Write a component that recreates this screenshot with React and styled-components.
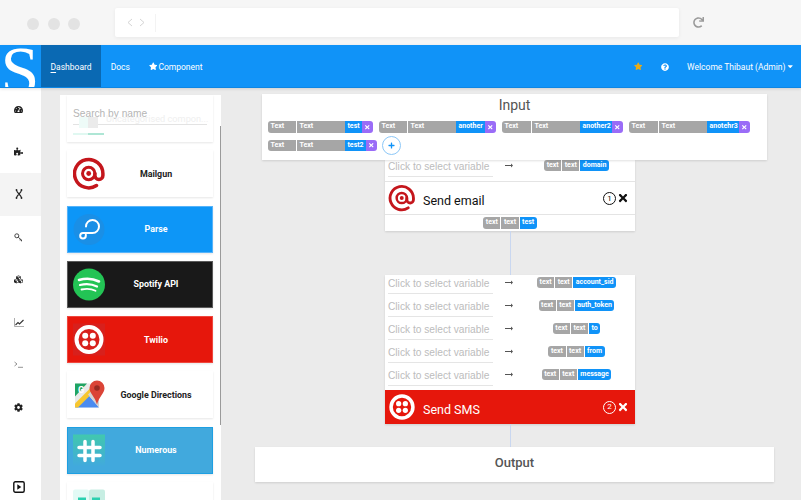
import styled, { createGlobalStyle } from 'styled-components'
import {
  FaTachometerAlt,
  FaPuzzlePiece,
  FaCubes,
  FaCog,
  FaStar,
  FaQuestionCircle,
  FaCaretDown,
  FaTimes,
  FaPlus,
  FaRedo,
} from 'react-icons/fa'

const GlobalStyle = createGlobalStyle`
  html, body {
    margin: 0;
    height: 100%;
    overflow: hidden;
    background: #ebebeb;
    font-family: Roboto, "Liberation Sans", sans-serif;
  }
  * { box-sizing: border-box; }
`

const Page = styled.div`
  width: 801px;
  height: 500px;
  display: flex;
  flex-direction: column;
  overflow: hidden;
`

/* browser chrome */
const Chrome = styled.div`
  height: 45px;
  flex: none;
  background: #f6f6f6;
  display: flex;
  align-items: center;
  padding: 0 0 0 27px;
`
const Lights = styled.div`
  display: flex;
  gap: 8.5px;
  width: 88px;
  margin-top: 3px;
`
const Light = styled.span`
  width: 12px;
  height: 12px;
  border-radius: 50%;
  background: #e3e3e3;
`
const AddressBar = styled.div`
  width: 564px;
  height: 29px;
  background: #fff;
  border-radius: 2px;
  box-shadow: 0 1px 4px rgba(0, 0, 0, 0.06);
  display: flex;
  align-items: center;
  padding-left: 12px;
  gap: 6px;
`
const AddressDivider = styled.span`
  width: 1px;
  height: 18px;
  margin-left: 4px;
  background: #f3f3f3;
`
const Reload = styled.div`
  margin-left: 14px;
  color: #9a9a9a;
  font-size: 11px;
  display: flex;
`

/* top navigation */
const Navbar = styled.header`
  height: 43px;
  flex: none;
  background: #1093f8;
  border-bottom: 1px solid #0d86e4;
  box-shadow: 0 1px 3px rgba(0, 0, 0, 0.12);
  display: flex;
  align-items: stretch;
  color: #fff;
  font-size: 8.5px;
  position: relative;
  z-index: 3;
`
const Logo = styled.div`
  width: 41px;
  overflow: hidden;
  font-family: "Liberation Serif", serif;
  font-size: 70px;
  line-height: 54px;
  text-align: center;
  padding-right: 1px;
`
const NavItem = styled.a`
  display: flex;
  align-items: center;
  gap: 1px;
  padding: 1px 9.5px 0;
  background: ${(props) => (props.$active ? '#0a69b3' : 'transparent')};
`
const AccessKey = styled.span`
  text-decoration: underline;
  text-underline-offset: 2px;
`
const NavRight = styled.div`
  margin-left: auto;
  display: flex;
  align-items: center;
  padding: 1px 7px 0 0;
`
const NavStar = styled.span`
  color: #e8ab17;
  font-size: 8.5px;
  display: flex;
  margin-right: 19px;
`
const NavHelp = styled.span`
  font-size: 8px;
  display: flex;
  margin-right: 18px;
`
const Welcome = styled.span`
  display: flex;
  align-items: center;
`

/* body */
const Body = styled.div`
  flex: 1;
  display: flex;
  min-height: 0;
`
const Sidebar = styled.nav`
  width: 41px;
  flex: none;
  background: #fff;
  display: flex;
  flex-direction: column;
`
const SideItem = styled.div`
  height: 42.6px;
  flex: none;
  display: flex;
  align-items: center;
  justify-content: center;
  font-size: 9px;
  color: #222;
  padding-right: 4px;
  background: ${(props) => (props.$active ? '#f4f4f4' : 'transparent')};
`
const SideBottom = styled(SideItem)`
  margin-top: auto;
  height: 26px;
  color: #111;
`

const Panel = styled.aside`
  width: 161px;
  flex: none;
  margin: 7px 0 0 19px;
  background: #fff;
  padding: 0 8px 0 7px;
  display: flex;
  flex-direction: column;
  gap: 8.3px;
  position: relative;
`
const ScrollThumb = styled.div`
  position: absolute;
  right: 0;
  top: 31px;
  width: 1.5px;
  height: 299px;
  background: #9a9a9a;
`
const SearchCard = styled.div`
  height: 47px;
  flex: none;
  position: relative;
  box-shadow: 0 1px 2px rgba(0, 0, 0, 0.1);
  padding: 10px 6px 0;
`
const SearchInput = styled.div`
  height: 20px;
  border-bottom: 1px solid #e3e3e3;
  color: #b5b5b5;
  font-family: "Liberation Sans", sans-serif;
  font-size: 10.2px;
  line-height: 17px;
  position: relative;
`
const GhostTile = styled.span`
  position: absolute;
  left: 6px;
  top: 12px;
  width: 19px;
  height: 11px;
  background: linear-gradient(90deg, #eefbf8 50%, #ebebeb 50%);
`
const GhostLabel = styled.span`
  position: absolute;
  left: 33px;
  top: 8px;
  font-family: Roboto, sans-serif;
  font-size: 9.2px;
  line-height: 11px;
  color: #efefef;
  white-space: nowrap;
`
const GhostBar = styled.div`
  position: absolute;
  left: 6px;
  top: 38px;
  width: 31px;
  height: 2px;
  background: linear-gradient(90deg, #e0f8f1 50%, #aee6d5 50%);
`
const ToolCard = styled.div`
  height: 47px;
  flex: none;
  display: flex;
  align-items: center;
  padding: 0 5px;
  background: ${(props) => props.$bg};
  color: ${(props) => props.$fg};
  border: 1px solid ${(props) => props.$border};
  box-shadow: 0 1px 2px rgba(0, 0, 0, 0.1);
`
const ToolIcon = styled.svg`
  width: 32px;
  height: 35px;
  flex: none;
`
const ToolLabel = styled.div`
  flex: 1;
  text-align: center;
  font-size: 8.9px;
  font-weight: 700;
  white-space: nowrap;
`

/* flow canvas */
const Main = styled.main`
  flex: 1;
  min-width: 0;
  display: flex;
  flex-direction: column;
  align-items: flex-start;
`
const InputCard = styled.section`
  width: 505px;
  height: 66px;
  flex: none;
  margin: 6px 0 0 41px;
  background: #fff;
  box-shadow: 0 1px 2px rgba(0, 0, 0, 0.12);
  padding: 3px 6px 0;
  position: relative;
  z-index: 1;
`
const InputTitle = styled.h2`
  margin: 0;
  font-size: 14px;
  font-weight: 400;
  line-height: 16px;
  color: #555;
  text-align: center;
`
const OutputTitle = styled(InputTitle)`
  font-size: 13px;
  font-weight: 500;
`
const ChipWrap = styled.div`
  margin-top: 8px;
  display: flex;
  flex-wrap: wrap;
  align-items: center;
  gap: 7px 6px;
`
const Chip = styled.div`
  display: flex;
  height: 11.5px;
  border-radius: 3px;
  overflow: hidden;
  font-size: 7px;
  font-weight: 700;
  line-height: 11.5px;
  color: #fff;
  white-space: nowrap;
`
const ChipPart = styled.span`
  background: ${(props) => props.$bg || '#a6a6a6'};
  padding: 0 2.5px;
  margin-right: ${(props) => (props.$gap ? '1px' : '0')};
  width: ${(props) => props.$width || 'auto'};
  text-align: ${(props) => props.$align || 'left'};
`
const RemovePart = styled.span`
  width: 11px;
  background: #9a6cf7;
  display: flex;
  align-items: center;
  justify-content: center;
  font-size: 6.5px;
`
const AddButton = styled.button`
  width: 19px;
  height: 19px;
  margin: -4px 0 -4px -1px;
  padding: 0;
  border-radius: 50%;
  border: 1px solid #8cc7f7;
  background: #fff;
  color: #1093f8;
  font-size: 7px;
  display: flex;
  align-items: center;
  justify-content: center;
`
const FlowCard = styled.section`
  width: 250px;
  flex: none;
  margin-left: 164px;
  background: #fff;
  box-shadow: 0 1px 2px rgba(0, 0, 0, 0.12);
`
const VarRow = styled.div`
  height: ${(props) => props.$height || '23px'};
  display: flex;
  align-items: flex-end;
  overflow: hidden;
  padding: 0 0 4px 3px;
`
const VarField = styled.div`
  width: 105px;
  flex: none;
  height: 18px;
  border-bottom: 1px solid #e5e5e5;
  color: #bcbcbc;
  font-family: "Liberation Sans", sans-serif;
  font-size: 10.2px;
  line-height: 16px;
  white-space: nowrap;
`
const VarArrow = styled.svg`
  width: 8px;
  height: 5px;
  margin: 0 0 9px 12px;
  flex: none;
`
const VarTarget = styled.div`
  flex: 1;
  display: flex;
  justify-content: center;
  padding: 0 0 6px 5px;
`
const StepHeader = styled.div`
  height: 34px;
  display: flex;
  align-items: center;
  padding: 0 6px 0 3px;
  gap: 7px;
  background: ${(props) => props.$bg};
  color: ${(props) => props.$fg};
  border-top: ${(props) => props.$rule};
  border-bottom: ${(props) => props.$rule};
`
const StepLogo = styled.svg`
  width: 28px;
  height: 28px;
  flex: none;
`
const StepTitle = styled.div`
  flex: 1;
  margin-top: 4px;
  font-size: 12.5px;
  white-space: nowrap;
`
const StepNumber = styled.span`
  width: 13px;
  height: 13px;
  border-radius: 50%;
  border: ${(props) => (props.$thick ? '1.5px' : '1px')} solid currentColor;
  font-size: 8px;
  line-height: ${(props) => (props.$thick ? '10px' : '11px')};
  text-align: center;
`
const StepClose = styled.span`
  font-size: 12px;
  display: flex;
  margin-left: -6px;
`
const StepOutput = styled.div`
  height: 16px;
  display: flex;
  justify-content: center;
  padding-top: 2px;
`
const Connector = styled.div`
  width: 1px;
  height: ${(props) => props.$height};
  flex: none;
  margin-left: 289px;
  background: #c9d7f0;
`
const OutputCard = styled.section`
  width: 519px;
  height: 35px;
  flex: none;
  margin-left: 34px;
  background: #fff;
  box-shadow: 0 1px 2px rgba(0, 0, 0, 0.12);
  padding-top: 8px;
`

const MailgunMark = ({ Svg = ToolIcon }) => (
  <Svg viewBox="0 0 32 34" fill="none" stroke="#c4161c">
    <circle cx="15.7" cy="17" r="6.2" strokeWidth="3" />
    <circle cx="15.7" cy="17" r="2.4" fill="#c4161c" strokeWidth="0" />
    <path
      d="M21.9 17v2a4 4 0 0 0 8 0v-2A14.200 14.200 0 1 0 23.500 29"
      strokeWidth="3.500"
      strokeLinecap="round"
    />
  </Svg>
)

const ParseMark = () => (
  <ToolIcon viewBox="0 0 32 32" fill="none">
    <circle cx="16" cy="16" r="15.500" fill="#1a8fe6" />
    <path
      d="M13 13a6.500 6.500 0 1 1 6.500 6.500H10a2.800 2.800 0 1 0 2.800 2.800v-1"
      stroke="#fff"
      strokeWidth="2"
      strokeLinecap="round"
    />
  </ToolIcon>
)

const SpotifyMark = () => (
  <ToolIcon viewBox="0 0 32 32" fill="none" stroke="#fff" strokeLinecap="round">
    <circle cx="16" cy="16" r="16" fill="#23c455" stroke="none" />
    <path d="M6 11.500c7-2 14-1.500 20 1.500" strokeWidth="2.600" />
    <path d="M7 16.500c6-1.500 12-1 17 1.500" strokeWidth="2.200" />
    <path d="M8.500 21c5-1 10-.7 14 1.300" strokeWidth="1.800" />
  </ToolIcon>
)

const TwilioSymbol = () => (
  <>
    <circle cx="16" cy="16" r="12.500" fill="none" stroke="#fff" strokeWidth="4" />
    <circle cx="12.200" cy="12.200" r="3" fill="#fff" />
    <circle cx="19.800" cy="12.200" r="3" fill="#fff" />
    <circle cx="12.200" cy="19.800" r="3" fill="#fff" />
    <circle cx="19.800" cy="19.800" r="3" fill="#fff" />
  </>
)

const TwilioMark = () => (
  <ToolIcon viewBox="0 0 32 32">
    <rect width="32" height="32" fill="#d8201c" />
    <TwilioSymbol />
  </ToolIcon>
)

const DirectionsMark = () => (
  <ToolIcon viewBox="0 0 32 32">
    <rect x="2" y="5" width="24" height="24" rx="1.500" fill="#e9e9e9" />
    <path d="M2 5h12L2 18z" fill="#1fa463" />
    <path d="M2 29l13-13 11 13z" fill="#4a8bf0" />
    <path d="M2 29v-4L21 6h4v3L5 29z" fill="#f7c62f" />
    <path d="M15 16l11-11v24z" fill="#d4d4d4" />
    <path
      d="M24 2a7.500 7.500 0 0 1 7.500 7.500C31.500 15 26 18 24 26c-2-8-7.500-11-7.500-16.500A7.500 7.500 0 0 1 24 2z"
      fill="#db4437"
    />
    <circle cx="24" cy="9.500" r="2.800" fill="#972b23" />
    <text x="5" y="14.500" fontSize="9" fontWeight="700" fill="#fff">G</text>
  </ToolIcon>
)

const NumerousMark = () => (
  <ToolIcon viewBox="0 0 32 32">
    <defs>
      <linearGradient id="numerousFill" x1="0" y1="0" x2="0" y2="1">
        <stop offset="0" stopColor="#41c8ae" />
        <stop offset="1" stopColor="#41a9dd" />
      </linearGradient>
    </defs>
    <rect width="32" height="32" fill="url(#numerousFill)" />
    <path
      d="M12 7v19M20 7v19M6 13h21M6 21h21"
      stroke="#fff"
      strokeWidth="3.500"
      strokeLinecap="round"
    />
  </ToolIcon>
)

const CalcMark = () => (
  <ToolIcon viewBox="0 0 32 32">
    <rect width="16" height="32" rx="2" fill="#e2faf5" />
    <rect x="16" width="16" height="32" rx="2" fill="#c7eee3" />
    <rect x="5" y="8" width="8" height="8" fill="#2ad0b0" />
    <rect x="19" y="8" width="8" height="8" fill="#2ad0b0" />
  </ToolIcon>
)

const ChainIcon = () => (
  <svg width="8" height="10" viewBox="0 0 8 10" fill="none" stroke="#222" strokeWidth="1.100">
    <path d="M1.500 1c0 2.700 5 5.300 5 8M6.500 1c0 2.700-5 5.300-5 8" />
    <circle cx="1.500" cy="1" r=".9" fill="#222" stroke="none" />
    <circle cx="6.500" cy="1" r=".9" fill="#222" stroke="none" />
    <circle cx="1.500" cy="9" r=".9" fill="#222" stroke="none" />
    <circle cx="6.500" cy="9" r=".9" fill="#222" stroke="none" />
  </svg>
)

const KeyIcon = () => (
  <svg width="9" height="9" viewBox="0 0 9 9" fill="none" stroke="#444" strokeWidth="1">
    <circle cx="2.800" cy="2.800" r="2" />
    <path d="M4.300 4.300L8 7.500M6.200 6v1.500M7.500 7v1.300" />
  </svg>
)

const ChartIcon = () => (
  <svg width="10" height="9" viewBox="0 0 10 9" fill="none" stroke="#333">
    <path d="M.5 0v8.500H10" stroke="#999" strokeWidth=".8" />
    <path d="M1.500 7L4 4.500 5.500 6 9.500 2" strokeWidth="1.100" />
  </svg>
)

const TerminalIcon = () => (
  <svg width="9" height="7" viewBox="0 0 9 7" fill="none" stroke="#777" strokeWidth=".8">
    <path d="M.5 1l2.500 2-2.500 2M4 6.300h5" />
  </svg>
)

const PlayBoxIcon = () => (
  <svg width="12" height="12" viewBox="0 0 12 12">
    <rect x=".8" y=".8" width="10.400" height="10.400" rx="1.500" fill="none" stroke="#111" strokeWidth="1.400" />
    <path d="M4.300 3.300l4 2.700-4 2.700z" fill="#111" />
  </svg>
)

const ArrowMark = () => (
  <VarArrow viewBox="0 0 8 5" fill="#555">
    <rect y="2" width="7" height="1" />
    <path d="M6 .5L8 2.500 6 4.500z" />
  </VarArrow>
)

const BackArrow = () => (
  <svg width="6" height="9" viewBox="0 0 6 9" fill="none" stroke="#d5d5d5">
    <path d="M5 1L1 4.500 5 8" />
  </svg>
)

const ForwardArrow = () => (
  <svg width="6" height="9" viewBox="0 0 6 9" fill="none" stroke="#d5d5d5">
    <path d="M1 1l4 3.500L1 8" />
  </svg>
)

const sideIcons = [
  <FaTachometerAlt />,
  <FaPuzzlePiece />,
  <ChainIcon />,
  <KeyIcon />,
  <FaCubes />,
  <ChartIcon />,
  <TerminalIcon />,
  <FaCog />,
]

const tools = [
  { name: 'Mailgun', icon: <MailgunMark />, bg: '#fff', fg: '#222', border: '#fff' },
  { name: 'Parse', icon: <ParseMark />, bg: '#0d96f7', fg: '#fff', border: '#55b3fa' },
  { name: 'Spotify API', icon: <SpotifyMark />, bg: '#191919', fg: '#fff', border: '#5a5a5a' },
  { name: 'Twilio', icon: <TwilioMark />, bg: '#e6170c', fg: '#fff', border: '#f0473e' },
  { name: 'Google Directions', icon: <DirectionsMark />, bg: '#fff', fg: '#222', border: '#fff' },
  { name: 'Numerous', icon: <NumerousMark />, bg: '#41a9dd', fg: '#fff', border: '#1d9fe2' },
  { name: '', icon: <CalcMark />, bg: '#fff', fg: '#222', border: '#fff' },
]

const inputs = [
  { label: 'test', first: '28px', width: '17px' },
  { label: 'another', first: '28px', width: '29px' },
  { label: 'another2', first: '29px', width: '32px' },
  { label: 'anotehr3', first: '29px', width: '32px' },
  { label: 'test2', first: '28px', width: '21px' },
]

const smsVars = ['account_sid', 'auth_token', 'to', 'from', 'message']

const InputChip = ({ label, first, width }) => (
  <Chip>
    <ChipPart $gap $width={first}>Text</ChipPart>
    <ChipPart $width="48px">Text</ChipPart>
    <ChipPart $bg="#1093f8" $width={width} $align="center">{label}</ChipPart>
    <RemovePart><FaTimes /></RemovePart>
  </Chip>
)

const VarChip = ({ label }) => (
  <Chip>
    <ChipPart $gap>text</ChipPart>
    <ChipPart $gap>text</ChipPart>
    <ChipPart $bg="#1093f8">{label}</ChipPart>
  </Chip>
)

const Variable = ({ label, height }) => (
  <VarRow $height={height}>
    <VarField>Click to select variable</VarField>
    <ArrowMark />
    <VarTarget><VarChip label={label} /></VarTarget>
  </VarRow>
)

function App() {
  return (
    <Page>
      <GlobalStyle />
      <Chrome>
        <Lights>
          <Light />
          <Light />
          <Light />
        </Lights>
        <AddressBar>
          <BackArrow />
          <ForwardArrow />
          <AddressDivider />
        </AddressBar>
        <Reload><FaRedo /></Reload>
      </Chrome>

      <Navbar>
        <Logo>S</Logo>
        <NavItem $active><span><AccessKey>D</AccessKey>ashboard</span></NavItem>
        <NavItem>Docs</NavItem>
        <NavItem><FaStar />Component</NavItem>
        <NavRight>
          <NavStar><FaStar /></NavStar>
          <NavHelp><FaQuestionCircle /></NavHelp>
          <Welcome>Welcome Thibaut (Admin) <FaCaretDown /></Welcome>
        </NavRight>
      </Navbar>

      <Body>
        <Sidebar>
          {sideIcons.map((icon, i) => (
            <SideItem key={i} $active={i === 2}>{icon}</SideItem>
          ))}
          <SideBottom><PlayBoxIcon /></SideBottom>
        </Sidebar>

        <Panel>
          <SearchCard>
            <SearchInput>
              <GhostTile />
              <GhostLabel>Uncategorised compon...</GhostLabel>
              Search by name
            </SearchInput>
            <GhostBar />
          </SearchCard>
          {tools.map((tool) => (
            <ToolCard key={tool.name} $bg={tool.bg} $fg={tool.fg} $border={tool.border}>
              {tool.icon}
              <ToolLabel>{tool.name}</ToolLabel>
            </ToolCard>
          ))}
          <ScrollThumb />
        </Panel>

        <Main>
          <InputCard>
            <InputTitle>Input</InputTitle>
            <ChipWrap>
              {inputs.map((chip) => (
                <InputChip key={chip.label} {...chip} />
              ))}
              <AddButton><FaPlus /></AddButton>
            </ChipWrap>
          </InputCard>

          <FlowCard>
            <Variable label="domain" height="21px" />
            <StepHeader $bg="#fff" $fg="#111" $rule="1.500px solid #e4e4e4">
              <MailgunMark Svg={StepLogo} />
              <StepTitle>Send email</StepTitle>
              <StepNumber>1</StepNumber>
              <StepClose><FaTimes /></StepClose>
            </StepHeader>
            <StepOutput><VarChip label="test" /></StepOutput>
          </FlowCard>
          <Connector $height="44px" />

          <FlowCard>
            {smsVars.map((name) => (
              <Variable key={name} label={name} />
            ))}
            <StepHeader $bg="#e6170c" $fg="#fff" $rule="1px solid #e6170c">
              <StepLogo viewBox="0 0 32 32"><TwilioSymbol /></StepLogo>
              <StepTitle>Send SMS</StepTitle>
              <StepNumber $thick>2</StepNumber>
              <StepClose><FaTimes /></StepClose>
            </StepHeader>
          </FlowCard>
          <Connector $height="23px" />

          <OutputCard>
            <OutputTitle>Output</OutputTitle>
          </OutputCard>
        </Main>
      </Body>
    </Page>
  )
}

export default App
